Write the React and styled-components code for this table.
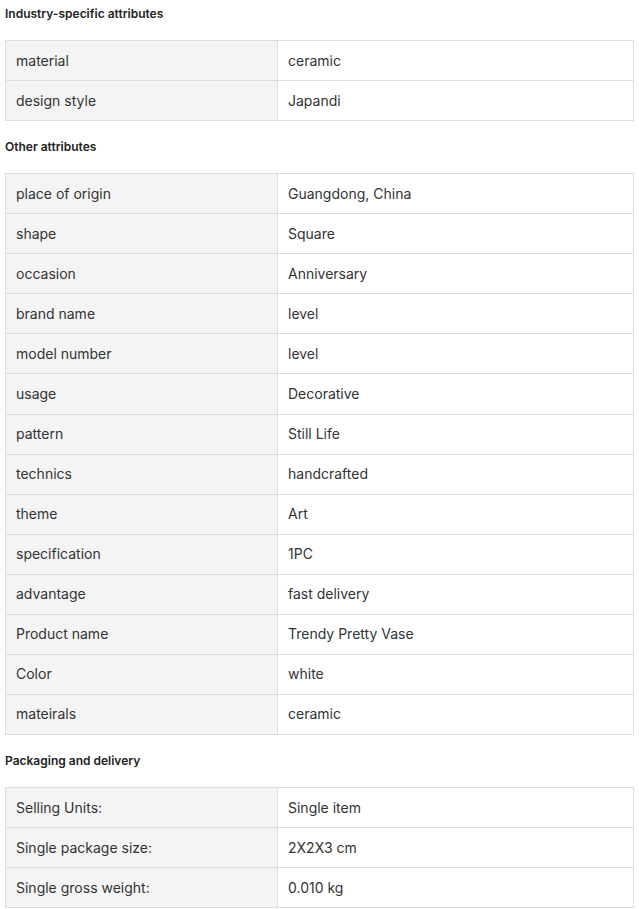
import React from "react";
import styled, { createGlobalStyle } from "styled-components";

const GlobalStyle = createGlobalStyle`
  html, body { margin: 0; padding: 0; background: #fff; }
  body { font-family: Inter, "Noto Sans", Arial, sans-serif; -webkit-font-smoothing: antialiased; }
`;

const Page = styled.div`
  padding: 4px 5px 0;
  display: flex;
  flex-direction: column;
  gap: 16px;
`;

const Section = styled.section`
  display: flex;
  flex-direction: column;
`;

const Title = styled.h3`
  margin: 0 0 16px;
  font-size: 12px;
  line-height: 20px;
  font-weight: 600;
  color: #222;
`;

const Table = styled.div`
  display: grid;
  grid-template-columns: 272px 1fr;
  border-top: 1px solid #dddddd;
  border-left: 1px solid #dddddd;
`;

const Cell = styled.div`
  box-sizing: border-box;
  height: 40.07px;
  padding: 0 10px 1px;
  display: flex;
  align-items: center;
  border-right: 1px solid #dddddd;
  border-bottom: 1px solid #dddddd;
  font-size: 14px;
  color: #333;
  background: ${(p) => (p.$label ? "#f4f4f4" : "#fff")};
`;

const sections = [
  {
    title: "Industry-specific attributes",
    rows: [
      ["material", "ceramic"],
      ["design style", "Japandi"],
    ],
  },
  {
    title: "Other attributes",
    rows: [
      ["place of origin", "Guangdong, China"],
      ["shape", "Square"],
      ["occasion", "Anniversary"],
      ["brand name", "level"],
      ["model number", "level"],
      ["usage", "Decorative"],
      ["pattern", "Still Life"],
      ["technics", "handcrafted"],
      ["theme", "Art"],
      ["specification", "1PC"],
      ["advantage", "fast delivery"],
      ["Product name", "Trendy Pretty Vase"],
      ["Color", "white"],
      ["mateirals", "ceramic"],
    ],
  },
  {
    title: "Packaging and delivery",
    rows: [
      ["Selling Units:", "Single item"],
      ["Single package size:", "2X2X3 cm"],
      ["Single gross weight:", "0.010 kg"],
    ],
  },
];

export default function App() {
  return (
    <>
      <GlobalStyle />
      <Page>
        {sections.map((s) => (
          <Section key={s.title}>
            <Title>{s.title}</Title>
            <Table>
              {s.rows.map(([k, v]) => (
                <React.Fragment key={k}>
                  <Cell $label>{k}</Cell>
                  <Cell>{v}</Cell>
                </React.Fragment>
              ))}
            </Table>
          </Section>
        ))}
      </Page>
    </>
  );
}
